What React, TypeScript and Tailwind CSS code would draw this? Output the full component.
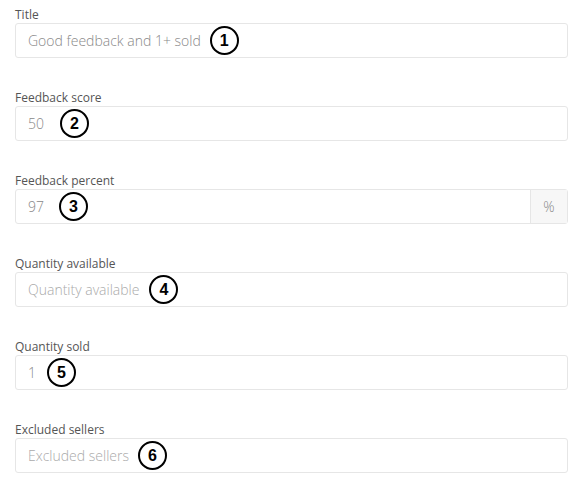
import React from "react";

const Badge = ({ n, ml }: { n: number; ml: string }) => (
  <span className={`${ml} inline-flex h-[29px] w-[29px] shrink-0 items-center justify-center rounded-full border-2 border-black bg-white text-[16px] font-bold text-black [font-family:Arial,'Liberation_Sans',sans-serif]`}>
    {n}
  </span>
);

type F = { label: string; text: string; placeholder?: boolean; n: number; suffix?: string; ml: string };

const fields: F[] = [
  { label: "Title", text: "Good feedback and 1+ sold", n: 1, ml: "ml-[9px]" },
  { label: "Feedback score", text: "50", n: 2, ml: "ml-[16px]" },
  { label: "Feedback percent", text: "97", n: 3, suffix: "%", ml: "ml-[15px]" },
  { label: "Quantity available", text: "Quantity available", placeholder: true, n: 4, ml: "ml-[10px]" },
  { label: "Quantity sold", text: "1", n: 5, ml: "ml-[11px]" },
  { label: "Excluded sellers", text: "Excluded sellers", placeholder: true, n: 6, ml: "ml-[9px]" },
];

export default function App() {
  return (
    <div className="h-[491px] w-[583px] bg-white px-[15px] pt-[6px] [font-family:'Open_Sans',sans-serif]">
      {fields.map((f) => (
        <div key={f.n} className="mb-[31px]">
          <div className="h-[17px] text-[12px] leading-[17px] text-[#555]">{f.label}</div>
          <div className="flex h-[35px] rounded-[3px] border border-[#e6e6e6]">
            <div className="flex flex-1 items-center pl-[12px]">
              <span className={`text-[14px] font-light ${f.placeholder ? "text-[#aaa]" : "text-[#888]"}`}>{f.text}</span>
              <Badge n={f.n} ml={f.ml} />
            </div>
            {f.suffix && (
              <div className="flex w-[37px] items-center justify-center border-l border-[#e6e6e6] bg-[#f7f7f7] text-[14px] font-light text-[#888]">
                {f.suffix}
              </div>
            )}
          </div>
        </div>
      ))}
    </div>
  );
}
